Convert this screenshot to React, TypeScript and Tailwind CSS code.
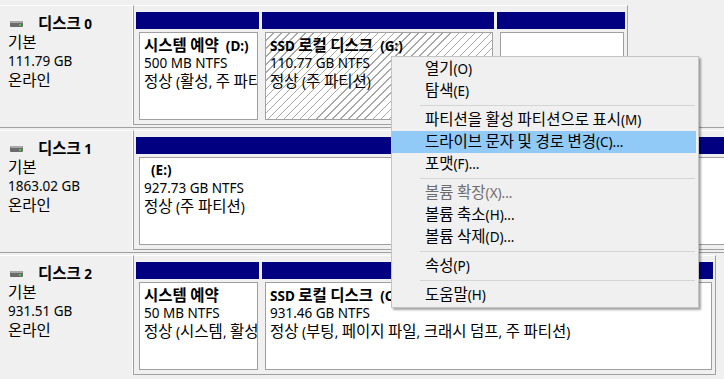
import React from 'react';

type Part = {
  w: number;
  title: string;
  size: string;
  status: string;
  hatched?: boolean;
};

type Disk = {
  name: string;
  size: string;
  parts: Part[];
  end?: boolean;
};

const disks: Disk[] = [
  {
    name: '디스크 0',
    size: '111.79 GB',
    end: true,
    parts: [
      { w: 123, title: '시스템 예약  (D:)', size: '500 MB NTFS', status: '정상 (활성, 주 파티션)' },
      { w: 232, title: 'SSD 로컬 디스크  (G:)', size: '110.77 GB NTFS', status: '정상 (주 파티션)', hatched: true },
      { w: 128, title: '', size: '', status: '' },
    ],
  },
  {
    name: '디스크 1',
    size: '1863.02 GB',
    parts: [{ w: 700, title: '\u00a0\u00a0(E:)', size: '927.73 GB NTFS', status: '정상 (주 파티션)' }],
  },
  {
    name: '디스크 2',
    size: '931.51 GB',
    end: true,
    parts: [
      { w: 123, title: '시스템 예약', size: '50 MB NTFS', status: '정상 (시스템, 활성, 주 파티션)' },
      { w: 451, title: 'SSD 로컬 디스크  (C:)', size: '931.46 GB NTFS', status: '정상 (부팅, 페이지 파일, 크래시 덤프, 주 파티션)' },
    ],
  },
];

// menu rows: null = separator
const menu: ({ label: string; active?: boolean; disabled?: boolean } | null)[] = [
  { label: '열기(O)' },
  { label: '탐색(E)' },
  null,
  { label: '파티션을 활성 파티션으로 표시(M)' },
  { label: '드라이브 문자 및 경로 변경(C)...', active: true },
  { label: '포맷(F)...' },
  null,
  { label: '볼륨 확장(X)...', disabled: true },
  { label: '볼륨 축소(H)...' },
  { label: '볼륨 삭제(D)...' },
  null,
  { label: '속성(P)' },
  null,
  { label: '도움말(H)' },
];

// hangul runs get a bigger size so they come out as wide as the windows UI font
const K = ({ t }: { t: string }) => (
  <>
    {t.split(/([\uac00-\ud7a3]+)/).map((s, i) =>
      i % 2 === 1 ? (
        <span key={i} className="text-[15.5px]">
          {s}
        </span>
      ) : (
        <React.Fragment key={i}>{s}</React.Fragment>
      )
    )}
  </>
);

const DiskIcon = () => (
  <svg width="13" height="6" viewBox="0 0 13 6" className="shrink-0">
    <rect x="0" y="0" width="13" height="6" rx="1" fill="#6b6b6b" />
    <rect x="0" y="0" width="13" height="2" rx="1" fill="#a9a9a9" />
    <rect x="9" y="3" width="2" height="2" fill="#3cd23c" />
  </svg>
);

const PartBox = ({ p }: { p: Part }) => (
  <div className="flex flex-col shrink-0" style={{ width: p.w }}>
    <div className="h-[17px] bg-[#000080]" />
    <div
      className={
        'mt-[3px] ml-[3px] mr-[1px] h-[88px] border border-[#a0a0a0] pl-[4px] pt-[3px] leading-[18px] overflow-hidden whitespace-pre ' +
        (p.hatched
          ? 'bg-[repeating-linear-gradient(135deg,#ffffff_0px,#ffffff_4.7px,#a8a8a8_4.7px,#a8a8a8_5.7px)]'
          : 'bg-white')
      }
    >
      <div className="font-bold h-[18px]">
        <K t={p.title} />
      </div>
      <div className="h-[18px]">{p.size}</div>
      <div className="h-[18px]">
        <K t={p.status} />
      </div>
    </div>
  </div>
);

const DiskRow = ({ d, first }: { d: Disk; first: boolean }) => (
  <div className="h-[125px] pt-[2px] flex flex-col">
    <div className={first ? 'h-px' : 'h-px bg-[#a0a0a0]'} />
    <div className="flex flex-1 pt-[2px]">
      <div className="w-[133px] shrink-0 border-t border-r border-white pl-[8px] pt-[8px] leading-[19px]">
        <div className="flex items-center gap-[15px] pl-[2px] h-[19px]">
          <DiskIcon />
          <span className="font-bold">
            <K t={d.name} />
          </span>
        </div>
        <div className="h-[19px]">
          <K t="기본" />
        </div>
        <div className="h-[19px]">{d.size}</div>
        <div className="h-[19px]">
          <K t="온라인" />
        </div>
      </div>
      <div
        className={
          'shrink-0 border-t border-t-white border-l border-l-[#a0a0a0] border-b border-b-[#a0a0a0] pl-[2px] pt-[6px] flex gap-[3px] ' +
          (d.end ? 'pr-[2px] border-r border-r-[#a0a0a0]' : '')
        }
      >
        {d.parts.map((p, i) => (
          <PartBox key={i} p={p} />
        ))}
      </div>
    </div>
  </div>
);

export default function App() {
  return (
    <div className="relative w-[724px] h-[379px] overflow-hidden bg-[#f0f0f0] text-[13.5px] text-black font-['Noto_Sans','Noto_Sans_CJK_KR',sans-serif]">
      {disks.map((d, i) => (
        <DiskRow key={i} d={d} first={i === 0} />
      ))}

      <div className="absolute left-[391px] top-[56px] w-[308px] border border-[#c4c4c4] bg-[#f0f0f0] pt-px pb-px shadow-[2px_2px_2px_rgba(0,0,0,0.35)]">
        {menu.map((m, i) =>
          m === null ? (
            <div key={i} className="h-[7px] flex items-center">
              <div className="ml-[28px] mr-[3px] flex-1 h-px bg-[#d4d4d4]" />
            </div>
          ) : (
            <div
              key={i}
              className={
                'h-[22px] flex items-center pl-[33px] mr-[2px] whitespace-pre ' +
                (m.active ? 'bg-[#91c9f7] ' : '') +
                (m.disabled ? 'text-[#6d6d6d]' : '')
              }
            >
              <span>
                <K t={m.label} />
              </span>
            </div>
          )
        )}
      </div>
    </div>
  );
}
